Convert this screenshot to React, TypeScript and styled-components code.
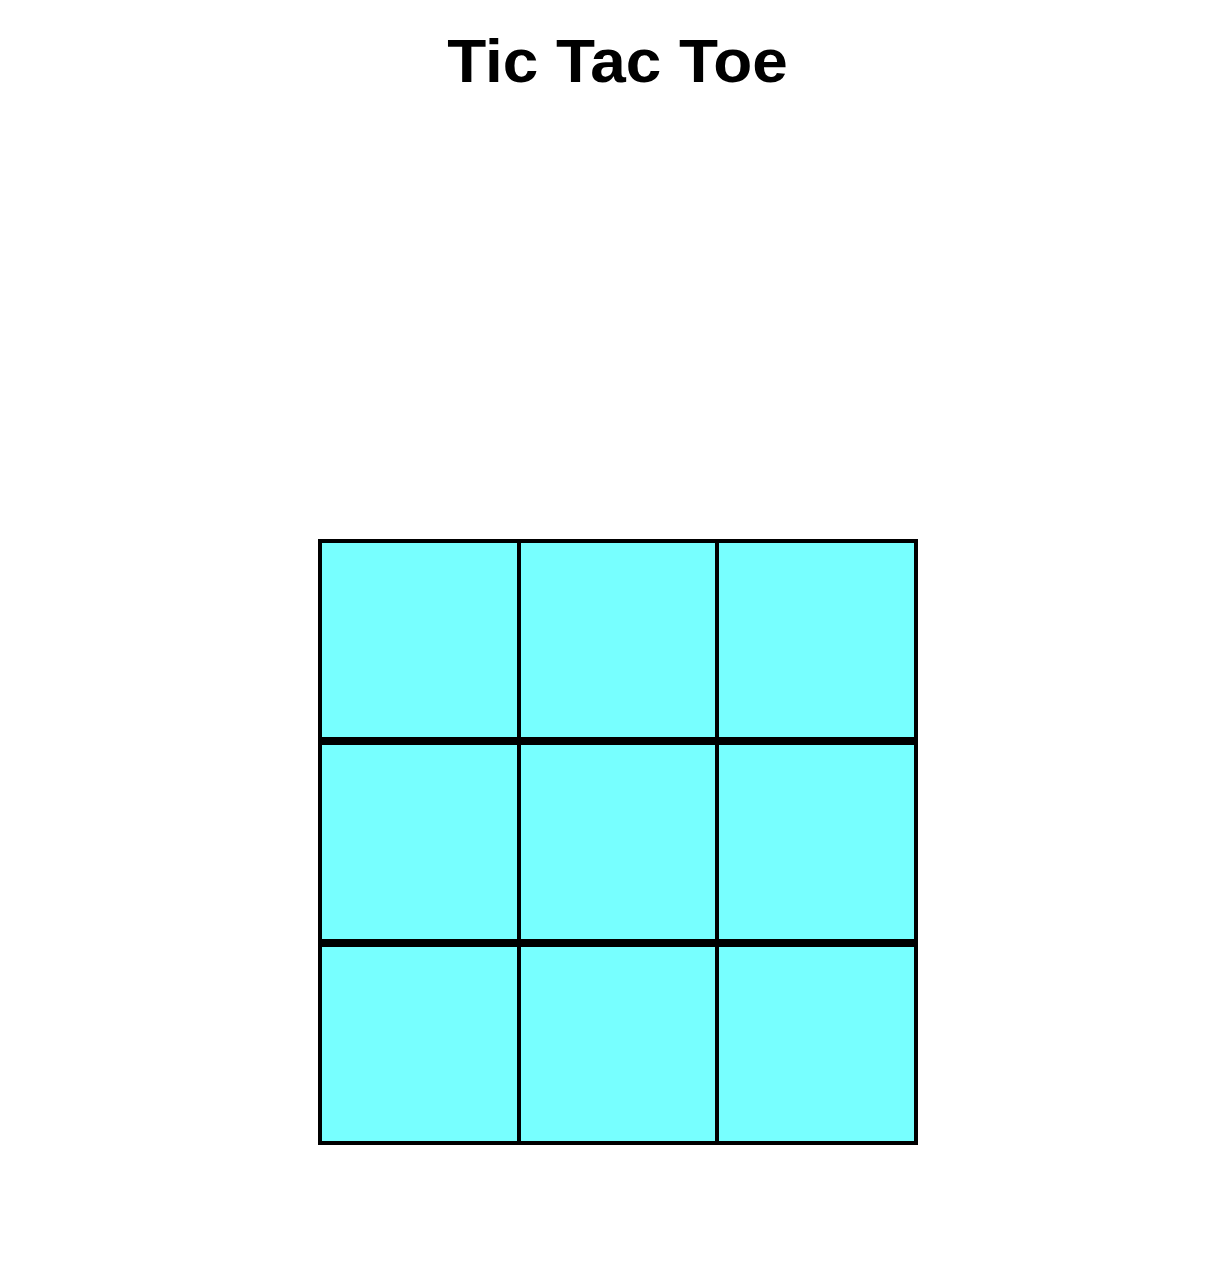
import { createGlobalStyle, styled } from "styled-components";

const GlobalStyle = createGlobalStyle`
  body {
    margin: 0;
    background: #ffffff;
    font-family: "Liberation Sans", Arial, sans-serif;
  }
`;

const Page = styled.main`
  display: flex;
  flex-direction: column;
  align-items: center;
`;

const Title = styled.h1`
  margin: 0;
  padding: 30px 0 0 7px;
  font-size: 62px;
  line-height: 62px;
  font-weight: 700;
  color: #000;
  transform: scaleX(1.03);
`;

const Board = styled.div`
  width: 600px;
  margin: 447px 0 0 8px;
`;

const Row = styled.div`
  display: flex;
  border: 2px solid #000;
`;

const Cell = styled.button`
  flex: 1;
  height: 198px;
  box-sizing: border-box;
  border: 2px solid #000;
  background: #77ffff;
  padding: 0;
  cursor: pointer;
`;

const rows = [0, 1, 2];

const App = () => {
  return (
    <Page>
      <GlobalStyle />
      <Title>Tic Tac Toe</Title>
      <Board>
        {rows.map((r) => (
          <Row key={`row${r}`}>
            {rows.map((c) => (
              <Cell key={`cell${r}${c}`} />
            ))}
          </Row>
        ))}
      </Board>
    </Page>
  );
};

export default App;
